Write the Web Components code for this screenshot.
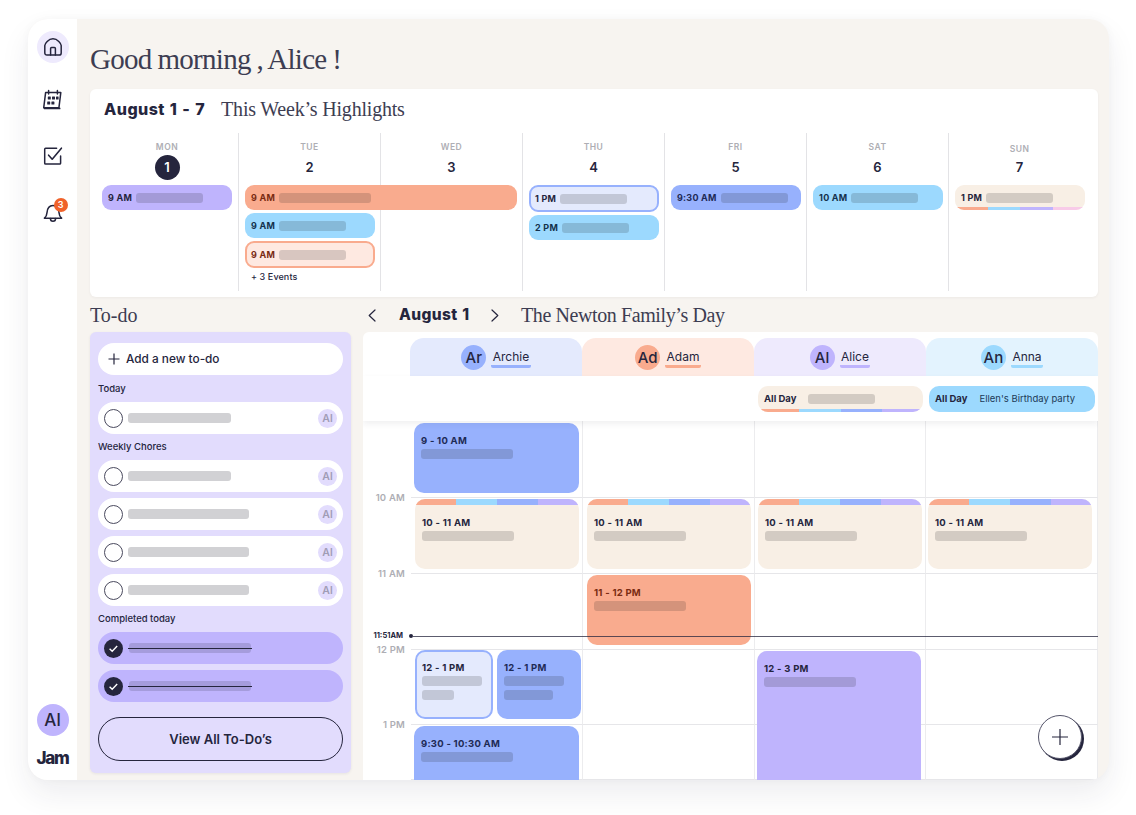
<!DOCTYPE html>
<html lang="en">
<head>
<meta charset="utf-8">
<title>Jam</title>
<style>
  html, body { margin: 0; background: #fff; }
  body { font-family: Inter, "Liberation Sans", sans-serif; color: #25253d; padding: 19px 27px 0 28px; height: 815px; box-sizing: border-box; overflow: hidden; }
</style>
</head>
<body>
<jam-app>
  <side-nav slot="nav"></side-nav>
  <week-highlights slot="week">
    <week-day name="MON" num="1" today>
      <week-event kind="violet" time="9 AM" bar="67"></week-event>
    </week-day>
    <week-day name="TUE" num="2">
      <week-event kind="peach" time="9 AM" bar="92" span></week-event>
      <week-event kind="sky" time="9 AM" bar="67"></week-event>
      <week-event kind="peach-soft" time="9 AM" bar="67"></week-event>
      <span class="more">+ 3 Events</span>
    </week-day>
    <week-day name="WED" num="3"></week-day>
    <week-day name="THU" num="4">
      <week-event kind="blue-soft" time="1 PM" bar="67"></week-event>
      <week-event kind="sky" time="2 PM" bar="67"></week-event>
    </week-day>
    <week-day name="FRI" num="5">
      <week-event kind="blue" time="9:30 AM" bar="67"></week-event>
    </week-day>
    <week-day name="SAT" num="6">
      <week-event kind="sky" time="10 AM" bar="67"></week-event>
    </week-day>
    <week-day name="SUN" num="7" low>
      <week-event kind="cream" time="1 PM" bar="67" stripes></week-event>
    </week-day>
  </week-highlights>
  <todo-panel slot="todo">
    <todo-label>Today</todo-label>
    <todo-item bar="103"></todo-item>
    <todo-label>Weekly Chores</todo-label>
    <todo-item bar="103"></todo-item>
    <todo-item bar="121"></todo-item>
    <todo-item bar="121"></todo-item>
    <todo-item bar="121"></todo-item>
    <todo-label>Completed today</todo-label>
    <todo-item done></todo-item>
    <todo-item done></todo-item>
  </todo-panel>
  <day-view slot="day"></day-view>
</jam-app>

<script>
const navy = "#25253d";
const kinds = {
  violet: { bg: "#bfb4fd", ink: "#25253d" },
  peach: { bg: "#f9ab8e", ink: "#7a2b12" },
  sky: { bg: "#9cd9fe", ink: "#14324d" },
  blue: { bg: "#97b1fd", ink: "#1e2a55" },
  cream: { bg: "#f8efe5", ink: "#25253d" },
  "peach-soft": { bg: "#fee9e1", ink: "#7a2b12", line: "#f9ab8e" },
  "blue-soft": { bg: "#e4eafd", ink: "#25253d", line: "#97b1fd" },
};

class JamApp extends HTMLElement {
  constructor() {
    super();
    this.attachShadow({ mode: "open" });
  }
  connectedCallback() {
    this.shadowRoot.innerHTML = `
      <style>
        :host { display: flex; width: 1081px; height: 761px; border-radius: 20px; overflow: hidden; background: #f7f4f0; box-shadow: 0 14px 30px rgba(40,40,60,.08), 0 0 10px rgba(40,40,60,.03); }
        main { flex: 1; min-width: 0; padding: 0 11px 0 13px; display: flex; flex-direction: column; }
        h1 { margin: 0; padding: 22px 0 12px; font: 400 29px/36px "Liberation Serif", serif; letter-spacing: -.7px; word-spacing: -.8px; color: #3d3d52; }
        .lower { display: flex; gap: 12px; margin-top: 8px; flex: 1; min-height: 0; }
        .left { width: 261px; display: flex; flex-direction: column; }
        .left h2 { margin: 0; height: 27px; font: 400 20px/20px "Liberation Serif", serif; color: #3d3d52; }
        .right { flex: 1; min-width: 0; }
      </style>
      <slot name="nav"></slot>
      <main>
        <h1>Good morning , Alice !</h1>
        <slot name="week"></slot>
        <div class="lower">
          <div class="left"><h2>To-do</h2><slot name="todo"></slot></div>
          <div class="right"><slot name="day"></slot></div>
        </div>
      </main>`;
  }
}
customElements.define("jam-app", JamApp);

class SideNav extends HTMLElement {
  constructor() {
    super();
    this.attachShadow({ mode: "open" });
  }
  connectedCallback() {
    this.shadowRoot.innerHTML = `
      <style>
        :host { display: flex; flex-direction: column; align-items: center; width: 49px; background: #fff; padding: 12px 0 12px; box-sizing: border-box; flex: none; }
        .ico { width: 32px; height: 32px; display: flex; align-items: center; justify-content: center; border-radius: 50%; position: relative; }
        .home { background: #eeeafd; }
        svg { display: block; fill: none; stroke: ${navy}; stroke-width: 1.5; stroke-linejoin: round; stroke-linecap: round; }
        .badge { position: absolute; left: 17px; top: 2px; width: 14px; height: 14px; border-radius: 50%; background: #f0622a; color: #fff; font: 600 9px/14px Inter, sans-serif; text-align: center; }
        .me { margin-top: auto; width: 32px; height: 32px; border-radius: 50%; background: #bfb4fd; font: 500 17px/32px Inter, sans-serif; text-align: center; color: ${navy}; }
        .logo { margin-top: 12px; font: 800 17px/20px Inter, sans-serif; letter-spacing: -1.3px; color: ${navy}; }
      </style>
      <div class="ico home"><svg width="20" height="20" viewBox="0 0 20 20"><path d="M1.8 8.6C1.8 6.6 5.4 1.8 10 1.8s8.2 4.8 8.2 6.8v7.4c0 1.2-.9 2.1-2.1 2.1H3.9c-1.2 0-2.1-.9-2.1-2.1z"/><path d="M7.6 18v-6.4c0-.6.4-1 1-1h2.8c.6 0 1 .4 1 1V18"/></svg></div>
      <div class="ico" style="margin-top:20px"><svg width="21" height="21" viewBox="0 0 21 21"><path d="M3.6 3.6h15.2l-1.9 15.2H1.7z"/><path d="M6.6 1.5v3.6M15.4 1.5v3.6"/><path d="M17.6 19.4h-15" stroke-width="1.8"/><g fill="${navy}" stroke="none"><rect x="5.8" y="7.6" width="3" height="3" rx=".5"/><rect x="10" y="7.6" width="3" height="3" rx=".5"/><rect x="14" y="7.6" width="2.6" height="3" rx=".5"/><rect x="5.2" y="12.4" width="3" height="3" rx=".5"/><rect x="9.4" y="12.4" width="3" height="3" rx=".5"/></g></svg></div>
      <div class="ico" style="margin-top:25px"><svg width="20" height="20" viewBox="0 0 20 20"><path d="M17.6 10v7.2c0 .5-.4.9-.9.9H2.6c-.5 0-.9-.4-.9-.9V3.2c0-.5.4-.9.9-.9h11"/><path d="M5.6 9.2l3.6 4L18.4 2.2" stroke-width="1.6"/></svg></div>
      <div class="ico" style="margin-top:24px"><svg width="20" height="22" viewBox="0 0 20 22"><path d="M1.4 17.2c1.6-1.2 2.4-3 2.6-5.6.3-4.2 2.4-7.2 6-7.2s5.7 3 6 7.2c.2 2.6 1 4.4 2.6 5.6z"/><path d="M7.4 17.4c0 1.8 1.1 2.8 2.6 2.8s2.6-1 2.6-2.8"/></svg><span class="badge">3</span></div>
      <div class="me">Al</div>
      <div class="logo">Jam</div>`;
  }
}
customElements.define("side-nav", SideNav);

class WeekHighlights extends HTMLElement {
  constructor() {
    super();
    this.attachShadow({ mode: "open" });
  }
  connectedCallback() {
    this.shadowRoot.innerHTML = `
      <style>
        :host { display: block; height: 208px; background: #fff; border-radius: 6px; box-sizing: border-box; padding-left: 6px; flex: none; box-shadow: 0 1px 3px rgba(40,40,60,.05); }
        header { display: flex; align-items: center; height: 44px; box-sizing: border-box; padding: 0 0 4px 8px; gap: 16px; }
        b { font: 800 16px/20px Inter, sans-serif; letter-spacing: .45px; word-spacing: 1px; color: ${navy}; }
        span { font: 400 20px/20px "Liberation Serif", serif; letter-spacing: -.2px; color: #3d3d52; }
        .days { display: grid; grid-template-columns: repeat(7, 142px); height: 158px; }
      </style>
      <header><b>August 1 - 7</b><span>This Week’s Highlights</span></header>
      <div class="days"><slot></slot></div>`;
  }
}
customElements.define("week-highlights", WeekHighlights);

class WeekDay extends HTMLElement {
  constructor() {
    super();
    this.attachShadow({ mode: "open" });
  }
  connectedCallback() {
    const isToday = this.hasAttribute("today");
    this.shadowRoot.innerHTML = `
      <style>
        :host { display: flex; flex-direction: column; align-items: flex-start; padding: 0 6px; box-sizing: border-box; border-left: 1px solid #e3e3e6; }
        :host([today]) { border-left: 0; }
        .name { align-self: center; height: 14px; margin-top: 7px; font: 600 8.5px/14px Inter, sans-serif; letter-spacing: .5px; color: #aeaeb4; }
        :host([low]) .name { margin-top: 9px; margin-bottom: -2px; }
        .num { align-self: center; width: 25px; height: 25px; margin: 1px 0 5px; border-radius: 50%; text-align: center; font: 600 13px/25px Inter, sans-serif; color: ${navy}; }
        .num.on { background: ${navy}; color: #fff; }
        .list { display: flex; flex-direction: column; align-items: flex-start; gap: 3px; width: 100%; }
        ::slotted(.more) { font: 500 9px/12px Inter, sans-serif; letter-spacing: .1px; color: ${navy}; padding: 0 0 0 6px; }
      </style>
      <div class="name">${this.getAttribute("name")}</div>
      <div class="num${isToday ? " on" : ""}">${this.getAttribute("num")}</div>
      <div class="list"><slot></slot></div>`;
  }
}
customElements.define("week-day", WeekDay);

class WeekEvent extends HTMLElement {
  constructor() {
    super();
    this.attachShadow({ mode: "open" });
  }
  connectedCallback() {
    const k = kinds[this.getAttribute("kind")];
    const isSpan = this.hasAttribute("span");
    const stripes = this.hasAttribute("stripes") ? `<div class="stripes"><i style="background:#f9ab8e"></i><i style="background:#9cd9fe"></i><i style="background:#bfb4fd"></i><i style="background:#f8cbe8"></i></div>` : "";
    this.shadowRoot.innerHTML = `
      <style>
        :host { display: flex; align-items: center; gap: 4px; width: ${isSpan ? 272 : 130}px; height: ${k.line ? 27 : 25}px; box-sizing: border-box; padding: 0 ${k.line ? 4 : 6}px; border-radius: 9px; background: ${k.bg}; position: relative; z-index: 1; overflow: hidden; ${k.line ? `border: 2px solid ${k.line};` : ""} }
        .t { font: 700 9px/12px Inter, sans-serif; letter-spacing: .25px; color: ${k.ink}; white-space: nowrap; }
        .b { height: 10px; border-radius: 3px; background: rgba(30,30,30,.17); }
        .stripes { position: absolute; left: 0; right: 0; bottom: 0; height: 3px; display: flex; }
        .stripes i { flex: 1; }
      </style>
      <span class="t">${this.getAttribute("time")}</span>
      <div class="b" style="width:${this.getAttribute("bar")}px"></div>
      ${stripes}`;
  }
}
customElements.define("week-event", WeekEvent);

class TodoPanel extends HTMLElement {
  constructor() {
    super();
    this.attachShadow({ mode: "open" });
  }
  connectedCallback() {
    this.shadowRoot.innerHTML = `
      <style>
        :host { display: flex; flex-direction: column; height: 441px; box-sizing: border-box; padding: 11px 8px 12px; background: #e2dcfd; border-radius: 6px; box-shadow: 0 1px 3px rgba(40,40,60,.08); }
        .add { display: flex; align-items: center; gap: 6px; height: 32px; padding-left: 10px; border-radius: 16px; background: #fff; font: 500 11.8px/16px Inter, sans-serif; color: ${navy}; flex: none; }
        svg { display: block; fill: none; stroke: ${navy}; stroke-width: 1.2; }
        .all { margin-top: auto; height: 44px; box-sizing: border-box; border: 1px solid ${navy}; border-radius: 22px; font: 600 13px/42px Inter, sans-serif; text-align: center; color: ${navy}; flex: none; }
      </style>
      <div class="add"><svg width="12" height="12" viewBox="0 0 12 12"><path d="M6 .5v11M.5 6h11"/></svg>Add a new to-do</div>
      <slot></slot>
      <div class="all">View All To-Do’s</div>`;
  }
}
customElements.define("todo-panel", TodoPanel);

class TodoLabel extends HTMLElement {
  constructor() {
    super();
    this.attachShadow({ mode: "open" });
  }
  connectedCallback() {
    this.shadowRoot.innerHTML = `
      <style>
        :host { display: block; height: 26px; margin-top: -6px; font: 500 9.5px/26px Inter, sans-serif; color: ${navy}; }
        :host(:first-child) { height: 27px; margin-top: 0; line-height: 27px; }
      </style>
      <slot></slot>`;
  }
}
customElements.define("todo-label", TodoLabel);

class TodoItem extends HTMLElement {
  constructor() {
    super();
    this.attachShadow({ mode: "open" });
  }
  connectedCallback() {
    const done = this.hasAttribute("done");
    const inner = done
      ? `<svg class="c" width="19" height="19" viewBox="0 0 19 19"><circle cx="9.5" cy="9.5" r="9.5" fill="${navy}"/><path d="M5.6 9.8l2.6 2.5 5-5.2" fill="none" stroke="#fff" stroke-width="1.4"/></svg>
         <div class="strike"></div>`
      : `<div class="ring"></div><div class="bar" style="width:${this.getAttribute("bar")}px"></div><div class="who">Al</div>`;
    this.shadowRoot.innerHTML = `
      <style>
        :host { display: flex; align-items: center; height: 32px; margin-bottom: 6px; padding: 0 6px; box-sizing: border-box; border-radius: 16px; background: ${done ? "#bfb4fd" : "#fff"}; }
        .ring { width: 19px; height: 19px; box-sizing: border-box; border: 1px solid #4a4a5e; border-radius: 50%; flex: none; }
        .c { flex: none; }
        .bar { height: 10px; margin-left: 5px; border-radius: 3px; background: #d1d1d4; }
        .who { margin-left: auto; width: 19px; height: 19px; border-radius: 50%; background: #e2dcfd; font: 600 10.5px/19px Inter, sans-serif; text-align: center; color: #a09cb5; }
        .strike { position: relative; margin-left: 6px; width: 122px; height: 10px; border-radius: 3px; background: rgba(30,30,50,.16); }
        .strike::after { content: ""; position: absolute; left: -1px; right: -1px; top: 4.5px; height: 1px; background: ${navy}; }
      </style>
      ${inner}`;
  }
}
customElements.define("todo-item", TodoItem);

class PersonHead extends HTMLElement {
  constructor() {
    super();
    this.attachShadow({ mode: "open" });
  }
  connectedCallback() {
    const c = this.getAttribute("color");
    this.shadowRoot.innerHTML = `
      <style>
        :host { display: flex; align-items: center; justify-content: center; gap: 5px; height: 38px; border-radius: 14px 14px 0 0; background: ${this.getAttribute("tint")}; }
        .av { width: 25px; height: 25px; border-radius: 50%; background: ${c}; font: 500 15px/26px Inter, sans-serif; text-align: center; color: ${navy}; }
        .n { font: 400 12px/14px Inter, sans-serif; color: ${navy}; padding: 0 1.5px 1px; border-bottom: 3px solid ${c}; border-radius: 0 0 2px 2px; margin-top: 3px; }
      </style>
      <div class="av">${this.getAttribute("short")}</div>
      <div class="n">${this.getAttribute("name")}</div>`;
  }
}
customElements.define("person-head", PersonHead);

class DayEvent extends HTMLElement {
  constructor() {
    super();
    this.attachShadow({ mode: "open" });
  }
  connectedCallback() {
    const k = kinds[this.getAttribute("kind")];
    const bars = (this.getAttribute("bars") || "92").split(",");
    const stripes = this.hasAttribute("stripes");
    const pad = k.line ? 5 : 7;
    this.shadowRoot.innerHTML = `
      <style>
        :host { display: block; box-sizing: border-box; min-width: 0; padding: ${stripes ? 18 : k.line ? 10 : 12}px ${pad}px 0; border-radius: 10px; background: ${k.bg}; position: relative; overflow: hidden; ${k.line ? `border: 2px solid ${k.line};` : ""} }
        .t { font: 700 9.5px/12px Inter, sans-serif; letter-spacing: .25px; color: ${k.ink}; white-space: nowrap; }
        .b { height: 10px; margin-top: 4px; border-radius: 3px; background: rgba(30,30,30,.17); }
        .t + .b { margin-top: 1.5px; }
        .s { position: absolute; left: 0; right: 0; top: 0; height: 6px; display: flex; }
        .s i { flex: 1; }
      </style>
      ${stripes ? `<div class="s"><i style="background:#f9ab8e"></i><i style="background:#9cd9fe"></i><i style="background:#97b1fd"></i><i style="background:#bfb4fd"></i></div>` : ""}
      <div class="t">${this.getAttribute("time")}</div>
      ${bars.map((w) => `<div class="b" style="width:${w}px"></div>`).join("")}`;
  }
}
customElements.define("day-event", DayEvent);

class DayView extends HTMLElement {
  constructor() {
    super();
    this.attachShadow({ mode: "open" });
  }
  connectedCallback() {
    const hours = ["", "10 AM", "11 AM", "12 PM", "1 PM"];
    let cells = "";
    hours.forEach((h, i) => {
      if (i > 0) cells += `<div class="lab" style="grid-area:${i}/1"><span>${h}</span></div>`;
      for (let c = 2; c < 6; c++) cells += `<div class="cell" style="grid-area:${i + 1}/${c}"></div>`;
    });
    this.shadowRoot.innerHTML = `
      <style>
        :host { display: block; }
        header { display: flex; align-items: center; height: 27px; box-sizing: border-box; padding-bottom: 7px; }
        svg { display: block; fill: none; stroke: ${navy}; stroke-width: 1.2; stroke-linecap: round; stroke-linejoin: round; }
        .prev { margin-left: 5px; }
        header b { margin-left: 23px; font: 800 15.5px/20px Inter, sans-serif; letter-spacing: .35px; word-spacing: 1px; color: ${navy}; width: 92px; }
        header span { margin-left: 22px; font: 400 20px/20px "Liberation Serif", serif; letter-spacing: -.4px; color: #3d3d52; }
        .card { position: relative; height: 448px; background: #fff; border-radius: 6px 6px 0 0; overflow: hidden; padding-top: 6px; box-sizing: border-box; }
        .heads { display: grid; grid-template-columns: 172px 172px 172px 172px; padding-left: 47px; }
        .allday { height: 45px; display: grid; grid-template-columns: 47px 172px 172px 172px 172px; align-items: start; position: relative; z-index: 2; background: #fff; box-shadow: 0 3px 6px rgba(40,40,60,.07); }
        .pill { height: 26px; margin-top: 10px; border-radius: 10px; display: flex; align-items: center; position: relative; overflow: hidden; font: 700 9.5px/12px Inter, sans-serif; padding-left: 6px; color: ${navy}; }
        .pill .txt { font-weight: 400; margin-left: 12px; color: #1c3a57; }
        .pill .b { width: 67px; height: 10px; margin-left: 12px; border-radius: 3px; background: rgba(30,30,30,.17); }
        .pill .s { position: absolute; left: 0; right: 0; bottom: 0; height: 3px; display: flex; }
        .pill .s i { flex: 1; }
        .body { position: relative; height: 359px; display: grid; grid-template-columns: 48px 172px 172px 171px 172px; grid-template-rows: 77px 76px 76px 75px 55px; overflow: hidden; }
        .cell { border-right: 1px solid #ececee; border-bottom: 1px solid #e6e6e9; box-sizing: border-box; }
        .lab { display: flex; align-items: flex-end; justify-content: flex-end; padding-right: 6px; }
        .lab span { font: 600 9.5px/12px Inter, sans-serif; letter-spacing: .2px; color: #aeaeb4; transform: translateY(6px); }
        .e { align-self: start; z-index: 1; }
        .pair { display: flex; gap: 4px; z-index: 1; align-self: start; height: 69px; margin: 0 2px 0 4px; }
        .pair day-event { height: 69px; }
        .pair day-event:first-child { width: 78px; flex: none; }
        .pair day-event:last-child { flex: 1; }
        .now { position: absolute; left: 0; right: 0; top: 209px; height: 12px; z-index: 3; display: flex; align-items: center; }
        .now em { width: 43px; flex: none; text-align: right; font: 700 7.5px/12px Inter, sans-serif; font-style: normal; color: ${navy}; margin-left: -3px; padding-right: 6px; }
        .now i { width: 4px; height: 4px; border-radius: 50%; background: ${navy}; flex: none; }
        .now u { flex: 1; height: 1px; background: rgba(37,37,61,.75); }
        .fab { position: absolute; right: 16px; top: 383px; width: 44px; height: 44px; box-sizing: border-box; border-radius: 50%; background: #fff; border: 1px solid #55556a; box-shadow: 2px 2px 0 ${navy}; z-index: 4; display: flex; align-items: center; justify-content: center; }
      </style>
      <header>
        <svg class="prev" width="8" height="13" viewBox="0 0 8 13"><path d="M7 1L1.2 6.5 7 12"/></svg>
        <b>August 1</b>
        <svg width="8" height="13" viewBox="0 0 8 13"><path d="M1 1l5.8 5.5L1 12"/></svg>
        <span>The Newton Family’s Day</span>
      </header>
      <div class="card">
        <div class="heads">
          <person-head short="Ar" name="Archie" color="#97b1fd" tint="#e4eafd"></person-head>
          <person-head short="Ad" name="Adam" color="#f9ab8e" tint="#fee9e1"></person-head>
          <person-head short="Al" name="Alice" color="#bfb4fd" tint="#eeeafd"></person-head>
          <person-head short="An" name="Anna" color="#9cd9fe" tint="#e3f3fe"></person-head>
        </div>
        <div class="allday">
          <div></div><div></div><div></div>
          <div class="pill" style="background:#f8efe5;margin-left:4px;margin-right:3px">All Day<div class="b"></div><div class="s"><i style="background:#f9ab8e"></i><i style="background:#9cd9fe"></i><i style="background:#97b1fd"></i><i style="background:#bfb4fd"></i></div></div>
          <div class="pill" style="background:#9cd9fe;margin-left:3px;margin-right:3px">All Day<span class="txt">Ellen's Birthday party</span></div>
        </div>
        <div class="body">
          ${cells}
          <day-event class="e" kind="blue" time="9 - 10 AM" style="grid-area:1/2;height:70px;margin:2px 4px 0 3px"></day-event>
          <day-event class="e" kind="cream" stripes time="10 - 11 AM" style="grid-area:2/2;height:70px;margin:1px 4px 0 4px"></day-event>
          <day-event class="e" kind="cream" stripes time="10 - 11 AM" style="grid-area:2/3;height:70px;margin:1px 4px 0 4px"></day-event>
          <day-event class="e" kind="cream" stripes time="10 - 11 AM" style="grid-area:2/4;height:70px;margin:1px 4px 0 3px"></day-event>
          <day-event class="e" kind="cream" stripes time="10 - 11 AM" style="grid-area:2/5;height:70px;margin:1px 6px 0 2px"></day-event>
          <day-event class="e" kind="peach" time="11 - 12 PM" style="grid-area:3/3;height:70px;margin:1px 4px 0 4px"></day-event>
          <div class="pair" style="grid-area:4/2">
            <day-event kind="blue-soft" time="12 - 1 PM" bars="60,32"></day-event>
            <day-event kind="blue" time="12 - 1 PM" bars="60,49"></day-event>
          </div>
          <day-event class="e" kind="violet" time="12 - 3 PM" style="grid-area:4/4/6/4;height:150px;margin:1px 5px 0 2px"></day-event>
          <day-event class="e" kind="blue" time="9:30 - 10:30 AM" style="grid-area:5/2;height:80px;margin:1px 4px 0 3px"></day-event>
          <div class="now"><em>11:51AM</em><i></i><u></u></div>
        </div>
        <div class="fab"><svg width="16" height="16" viewBox="0 0 16 16"><path d="M8 0v16M0 8h16"/></svg></div>
      </div>`;
  }
}
customElements.define("day-view", DayView);
</script>
</body>
</html>
